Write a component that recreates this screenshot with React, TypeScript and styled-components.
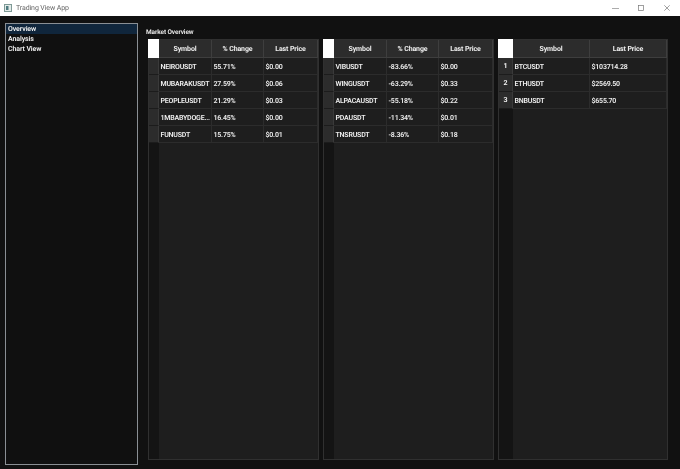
import React from 'react';
import styled, { createGlobalStyle } from 'styled-components';

const GlobalStyle = createGlobalStyle`
  html, body {
    margin: 0;
    padding: 0;
    background: #111111;
  }
  body {
    font-family: Roboto, "Noto Sans", sans-serif;
    text-rendering: geometricPrecision;
  }
`;

const Window = styled.div`
  width: 680px;
  height: 469px;
  display: flex;
  flex-direction: column;
  overflow: hidden;
  background: #111111;
  filter: blur(0.3px);
`;

const TitleBar = styled.div`
  height: 16px;
  flex: none;
  display: flex;
  align-items: center;
  background: #ffffff;
  padding-left: 4px;
`;

const AppIcon = styled.svg`
  width: 8px;
  height: 8px;
  margin-right: 4px;
`;

const TitleText = styled.span`
  font-size: 7px;
  letter-spacing: -0.1px;
  color: #666666;
  flex: 1;
`;

const WindowButton = styled.div`
  width: 26px;
  height: 16px;
  display: flex;
  align-items: center;
  justify-content: center;
`;

const Body = styled.div`
  flex: 1;
  min-height: 0;
  display: flex;
  padding: 7px 12px 4px 5px;
`;

const Sidebar = styled.div`
  width: 131px;
  height: 440px;
  flex: none;
  border: 1px solid #8a8f94;
  background: #101010;
  margin-right: 10px;
`;

const NavItem = styled.div<{ $active?: boolean }>`
  height: 10px;
  line-height: 10px;
  padding-left: 2px;
  font-size: 7px;
  letter-spacing: -0.1px;
  font-weight: 600;
  color: #f2f2f2;
  background: ${(p) => (p.$active ? '#10263c' : 'transparent')};
`;

const Main = styled.div`
  flex: 1;
  min-width: 0;
  display: flex;
  flex-direction: column;
`;

const Heading = styled.div`
  height: 16px;
  line-height: 16px;
  margin-top: 1px;
  margin-left: -2px;
  margin-bottom: -1px;
  font-size: 6.5px;
  letter-spacing: -0.1px;
  font-weight: 600;
  color: #eeeeee;
  flex: none;
`;

const Tables = styled.div`
  display: flex;
  gap: 4px;
`;

const Table = styled.div`
  width: 171px;
  height: 421px;
  display: flex;
  border: 1px solid #303030;
  box-sizing: border-box;
  background: #1e1e1e;
`;

const Gutter = styled.div<{ $wide?: boolean }>`
  width: ${(p) => (p.$wide ? 14 : 10)}px;
  flex: none;
  background: #141414;
  display: flex;
  flex-direction: column;
`;

const Corner = styled.div`
  height: 19px;
  margin: -1px 0 0 -1px;
  background: #ffffff;
  flex: none;
`;

const RowHeader = styled.div`
  height: 17px;
  box-sizing: border-box;
  background: #2c2c2c;
  border-bottom: 1px solid #1c1c1c;
  border-right: 1px solid #3a3a3a;
  font-size: 7px;
  font-weight: 700;
  color: #f2f2f2;
  display: flex;
  align-items: center;
  justify-content: center;
`;

const Grid = styled.div`
  flex: 1;
  min-width: 0;
  display: flex;
  flex-direction: column;
`;

const HeaderRow = styled.div<{ $cols: string }>`
  height: 18px;
  flex: none;
  display: grid;
  grid-template-columns: ${(p) => p.$cols};
  background: #2c2c2c;
`;

const HeaderCell = styled.div`
  box-sizing: border-box;
  border-right: 1px solid #3e3e3e;
  border-bottom: 1px solid #3e3e3e;
  display: flex;
  align-items: center;
  justify-content: center;
  font-size: 7px;
  letter-spacing: -0.1px;
  font-weight: 700;
  color: #eeeeee;
`;

const Row = styled.div<{ $cols: string }>`
  height: 17px;
  flex: none;
  display: grid;
  grid-template-columns: ${(p) => p.$cols};
`;

const Cell = styled.div`
  box-sizing: border-box;
  border-right: 1px solid #2c2c2c;
  border-bottom: 1px solid #2c2c2c;
  padding: 1px 0 0 1.5px;
  display: flex;
  align-items: center;
  font-size: 7px;
  letter-spacing: -0.2px;
  font-weight: 600;
  color: #eeeeee;
  white-space: nowrap;
  overflow: hidden;
`;

const Fill = styled.div`
  flex: 1;
  background: #1e1e1e;
`;

interface MarketTableProps {
  headers: string[];
  rows: string[][];
  cols: string;
  numbered?: boolean;
}

const MarketTable: React.FC<MarketTableProps> = ({ headers, rows, cols, numbered }) => (
  <Table>
    <Gutter $wide={numbered}>
      <Corner />
      {rows.map((row, i) => (
        <RowHeader key={row[0]}>{numbered ? i + 1 : ''}</RowHeader>
      ))}
    </Gutter>
    <Grid>
      <HeaderRow $cols={cols}>
        {headers.map((h) => (
          <HeaderCell key={h}>{h}</HeaderCell>
        ))}
      </HeaderRow>
      {rows.map((row) => (
        <Row key={row[0]} $cols={cols}>
          {row.map((value, i) => (
            <Cell key={i}>{value}</Cell>
          ))}
        </Row>
      ))}
      <Fill />
    </Grid>
  </Table>
);

const gainers = [
  ['NEIROUSDT', '55.71%', '$0.00'],
  ['MUBARAKUSDT', '27.59%', '$0.06'],
  ['PEOPLEUSDT', '21.29%', '$0.03'],
  ['1MBABYDOGE...', '16.45%', '$0.00'],
  ['FUNUSDT', '15.75%', '$0.01'],
];

const losers = [
  ['VIBUSDT', '-83.66%', '$0.00'],
  ['WINGUSDT', '-63.29%', '$0.33'],
  ['ALPACAUSDT', '-55.18%', '$0.22'],
  ['PDAUSDT', '-11.34%', '$0.01'],
  ['TNSRUSDT', '-8.36%', '$0.18'],
];

const majors = [
  ['BTCUSDT', '$103714.28'],
  ['ETHUSDT', '$2569.50'],
  ['BNBUSDT', '$655.70'],
];

const threeCols = '53px 52px 54px';
const twoCols = '77px 77px';
const changeHeaders = ['Symbol', '% Change', 'Last Price'];

export default function App() {
  return (
    <Window>
      <GlobalStyle />
      <TitleBar>
        <AppIcon viewBox="0 0 8 8">
          <rect x="0.5" y="0.5" width="7" height="7" fill="#e3ebe9" stroke="#7f9a96" />
          <rect x="2" y="2" width="2.5" height="4" fill="#4f7c80" />
        </AppIcon>
        <TitleText>Trading View App</TitleText>
        <WindowButton>
          <svg width="7" height="7" viewBox="0 0 7 7">
            <path d="M0 3.5H7" stroke="#888" strokeWidth="0.7" />
          </svg>
        </WindowButton>
        <WindowButton>
          <svg width="6" height="6" viewBox="0 0 6 6">
            <rect x="0.4" y="0.4" width="5.2" height="5.2" fill="none" stroke="#777" strokeWidth="0.7" />
          </svg>
        </WindowButton>
        <WindowButton>
          <svg width="6" height="6" viewBox="0 0 6 6">
            <path d="M0.3 0.3L5.7 5.7M5.7 0.3L0.3 5.7" stroke="#777" strokeWidth="0.7" />
          </svg>
        </WindowButton>
      </TitleBar>
      <Body>
        <Sidebar>
          <NavItem $active>Overview</NavItem>
          <NavItem>Analysis</NavItem>
          <NavItem>Chart View</NavItem>
        </Sidebar>
        <Main>
          <Heading>Market Overview</Heading>
          <Tables>
            <MarketTable headers={changeHeaders} rows={gainers} cols={threeCols} />
            <MarketTable headers={changeHeaders} rows={losers} cols={threeCols} />
            <MarketTable headers={['Symbol', 'Last Price']} rows={majors} cols={twoCols} numbered />
          </Tables>
        </Main>
      </Body>
    </Window>
  );
}
